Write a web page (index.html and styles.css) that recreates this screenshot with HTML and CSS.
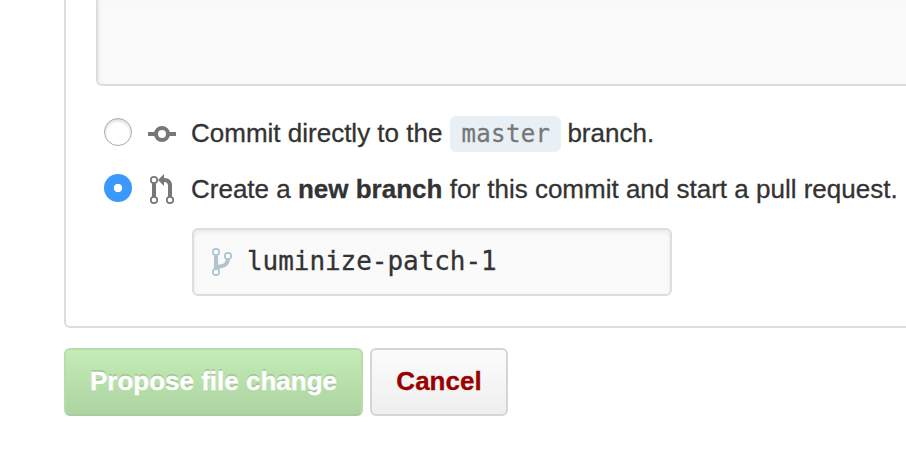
FILE: index.html
```html
<!DOCTYPE html>
<html lang="en">
<head>
<meta charset="utf-8">
<title>Commit changes</title>
<link rel="stylesheet" href="styles.css">
</head>
<body>
<form class="commit-form">
  <section class="panel">
    <div class="description"></div>
    <label class="choice">
      <input class="radio" type="radio" name="target">
      <svg class="icon" width="28" height="28" viewBox="0 0 28 28" fill="none" stroke="#777" stroke-width="4"><circle cx="14" cy="14" r="6"/><path d="M0 14h8M20 14h8"/></svg>
      <span class="choice-text"><span class="direct">Commit directly to the</span> <code class="branch">master</code> <span class="suffix">branch.</span></span>
    </label>
    <label class="choice">
      <input class="radio" type="radio" name="target" checked>
      <svg class="icon pull-icon" width="28" height="32" viewBox="0 0 28 32" fill="none" stroke="#777"><path stroke-width="4" d="M6 10v14M15 7h1q6 0 6 6v11"/><path fill="#777" stroke="none" d="M16 1v12L10 7z"/><g fill="#fff" stroke-width="1.7"><circle cx="6" cy="7" r="3.2"/><circle cx="6" cy="27" r="3.2"/><circle cx="22" cy="27" r="3.2"/></g></svg>
      <span class="choice-text pull">Create a <b>new branch</b> for this commit and start a pull request.</span>
    </label>
    <div class="branch-field">
      <svg width="22" height="30" viewBox="0 0 22 30" fill="none" stroke="#b0c4ce"><path stroke-width="4" d="M5 6v18M17 10c0 8-4 9-8 9.6-3 .5-4 1.400-4 4.400"/><g fill="#fafafa" stroke-width="1.7"><circle cx="5" cy="5" r="3.2"/><circle cx="17" cy="9" r="3.2"/><circle cx="5" cy="25" r="3.2"/></g></svg>
      <span class="branch-name">luminize-patch-1</span>
    </div>
  </section>
  <div class="actions">
    <button class="button primary" type="button">Propose file change</button>
    <button class="button danger" type="button">Cancel</button>
  </div>
</form>
</body>
</html>
```
FILE: styles.css
```css
* { box-sizing: border-box; }

body {
  margin: 0;
  overflow: hidden;
  background: #fff;
  color: #333;
  font: 26px/36px "Liberation Sans", Arial, sans-serif;
}

.commit-form { padding-left: 64px; }

.panel {
  height: 328px;
  padding-left: 30px;
  border: solid #ddd;
  border-width: 0 0 2px 2px;
  border-bottom-left-radius: 6px;
}

.description {
  height: 86px;
  border: solid #ddd;
  border-width: 0 0 2px 2px;
  border-bottom-left-radius: 6px;
  background: #fafafa;
  box-shadow: inset 3px 0 4px -2px rgba(0, 0, 0, .07);
}

.choice {
  display: flex;
  align-items: center;
  height: 36px;
  margin: 30px 0 0 8px;
  white-space: nowrap;
}

.choice + .choice { margin-top: 20px; }

.radio {
  appearance: none;
  flex: none;
  width: 28px;
  height: 28px;
  margin: 0 16px 4px 0;
  border: 1px solid #aaa;
  border-radius: 50%;
  background: #fff;
  box-shadow: inset 0 2px 3px rgba(0, 0, 0, .15);
}

.radio:checked {
  border: 0;
  background: radial-gradient(circle, #fff 3.8px, #3b99fc 4.6px);
  box-shadow: none;
}

.icon { flex: none; margin-right: 15px; }

.pull-icon { margin-bottom: 2px; }

.choice-text {
  display: flex;
  align-items: center;
  -webkit-text-stroke: .3px;
}

.direct,
.suffix { padding-bottom: 2px; }

.pull {
  display: block;
  padding-bottom: 2px;
}

.branch {
  height: 36px;
  margin: 0 6px 0 8px;
  padding: 0 11px;
  border-radius: 6px;
  background: #e8f0f6;
  color: #777;
  font: 24px/36px "DejaVu Sans Mono", monospace;
  letter-spacing: .38px;
}

.branch-field {
  display: flex;
  align-items: center;
  width: 480px;
  height: 68px;
  margin: 20px 0 0 96px;
  padding-left: 17px;
  border: 2px solid #ddd;
  border-radius: 6px;
  background: #fafafa;
  box-shadow: inset 0 2px 4px rgba(0, 0, 0, .075);
}

.branch-name {
  margin: 0 0 2px 14px;
  font: 26px/32px "DejaVu Sans Mono", monospace;
  letter-spacing: -.05px;
  -webkit-text-stroke: .3px;
}

.actions {
  display: flex;
  gap: 7px;
  margin-top: 20px;
}

.button {
  height: 68px;
  padding: 0 0 2px;
  border: 2px solid #d5d5d5;
  border-radius: 6px;
  font: bold 26px/36px "Liberation Sans", Arial, sans-serif;
  -webkit-text-stroke: .3px;
  white-space: nowrap;
}

.primary {
  width: 299px;
  border-color: #b8dcab #b8dcab #a9ca9e;
  background: linear-gradient(#c5edb7, #acd3a0);
  background-origin: border-box;
  color: #fff;
  text-shadow: 0 -2px 0 rgba(0, 0, 0, .15);
}

.danger {
  width: 138px;
  background: linear-gradient(#fcfcfc, #eee);
  color: #900;
}
```
